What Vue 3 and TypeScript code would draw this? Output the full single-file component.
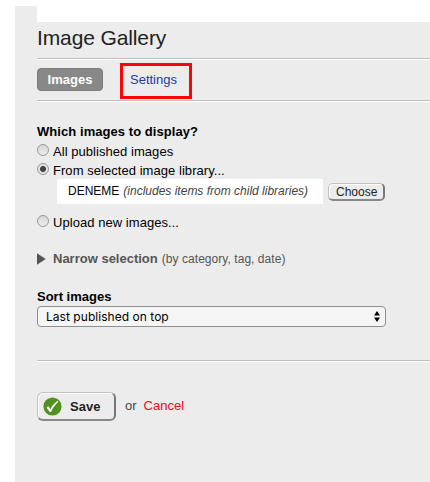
<script setup lang="ts">
import { ref } from 'vue'

const source = ref('library')
const library = 'DENEME'
const sortOrder = 'Last published on top'
</script>

<template>
  <div class="page">
    <main class="panel">
      <div class="notch"></div>
      <h1 class="title"><span>Image Gallery</span></h1>
      <nav class="tabs">
        <a class="tab active"><span>Images</span></a>
        <a class="tab marked"><span>Settings</span></a>
      </nav>
      <section class="choices">
        <h2 class="heading question"><span>Which images to display?</span></h2>
        <label class="option" @click="source = 'all'">
          <i class="radio" :class="{ on: source === 'all' }"></i><span>All published images</span>
        </label>
        <label class="option second" @click="source = 'library'">
          <i class="radio" :class="{ on: source === 'library' }"></i><span>From selected image library...</span>
        </label>
        <div class="library">
          <div class="library-name"><span>{{ library }}</span><em>(includes items from child libraries)</em></div>
          <button class="choose"><span>Choose</span></button>
        </div>
        <label class="option upload" @click="source = 'upload'">
          <i class="radio" :class="{ on: source === 'upload' }"></i><span>Upload new images...</span>
        </label>
      </section>
      <div class="narrow">
        <svg width="9" height="12" viewBox="0 0 9 12"><path d="M0 .3 8.7 6 0 11.7z" fill="#555" /></svg>
        <b>Narrow selection</b><span class="hint">(by category, tag, date)</span>
      </div>
      <h2 class="heading sort"><span>Sort images</span></h2>
      <div class="select">
        <span>{{ sortOrder }}</span>
        <svg width="6" height="11" viewBox="0 0 6 11"><path d="M3 0 6 4.5H0zM0 6.5h6L3 11z" fill="#000" /></svg>
      </div>
      <footer class="actions">
        <button class="save">
          <svg width="19" height="19" viewBox="0 0 19 19">
            <circle cx="9.5" cy="9.5" r="9.1" fill="#529023" />
            <path d="M3.5 10.4 5.2 9.2l2.2 3C8.9 9 11.2 6.2 14.6 3.8l.8.7C12.2 7.6 9.6 11 8.1 15H6.7z" fill="#fff" />
          </svg>
          <b>Save</b>
        </button>
        <span class="or">or</span>
        <a class="cancel">Cancel</a>
      </footer>
    </main>
  </div>
</template>

<style>
body { margin: 0; background: #fff; }
</style>

<style scoped>
.page {
  box-sizing: border-box;
  width: 430px;
  height: 482px;
  padding: 6px 0 0 15px;
  overflow: hidden;
  font: 13px/18px "Liberation Sans", Arial, sans-serif;
  color: #000;
}
.panel {
  box-sizing: border-box;
  height: 476px;
  padding-left: 22px;
  background: #ececec;
}
span, b, em { white-space: nowrap; }
.notch { height: 16px; background: #fff; }
.title {
  box-sizing: border-box;
  height: 37px;
  margin: 0;
  font-size: 21px;
  line-height: 32px;
  font-weight: 400;
  letter-spacing: -0.12px;
  color: #222;
  border-bottom: 1px solid #bdbdbd;
}
.tabs {
  box-sizing: border-box;
  display: flex;
  gap: 17px;
  height: 42px;
  padding-top: 3px;
  border-top: 1px solid #fff;
  border-bottom: 1px solid #bdbdbd;
}
.active {
  box-sizing: border-box;
  width: 66px;
  height: 23px;
  margin-top: 5px;
  border: 1px solid #7c7c7c;
  border-radius: 4px;
  background: #888;
  color: #fff;
  font-weight: 700;
  line-height: 22px;
  text-align: center;
}
.marked {
  box-sizing: border-box;
  width: 72px;
  height: 36px;
  padding-left: 7px;
  border: 3px solid #f90408;
  color: #1c3c9f;
  line-height: 27px;
}
.choices { border-top: 1px solid #fff; padding-top: 21px; }
.heading { margin: 0; font-size: 13px; line-height: 18px; height: 18px; }
.question { letter-spacing: 0.06px; }
.option { display: flex; gap: 4px; height: 19px; line-height: 21px; letter-spacing: 0.05px; }
.second { height: 20px; line-height: 22px; }
.radio {
  box-sizing: border-box;
  flex: none;
  width: 12px;
  height: 12px;
  margin-top: 3px;
  border: 1px solid #999;
  border-radius: 50%;
  background: linear-gradient(#d6d6d6, #ececec);
}
.radio.on { background: radial-gradient(circle, #444 0 2.6px, #e2e2e2 3.4px); }
.library { display: flex; gap: 5px; margin: -1px 0 0 20px; }
.library-name {
  box-sizing: border-box;
  display: flex;
  gap: 4px;
  width: 266px;
  height: 25px;
  padding-left: 11px;
  background: #fff;
  font-size: 12px;
  line-height: 24px;
}
em { color: #444; }
button {
  box-sizing: border-box;
  display: flex;
  align-items: center;
  padding: 0;
  font-family: inherit;
  background: #ececec;
  border: 2px solid;
  border-color: #c2c2c2 #777 #888 #c2c2c2;
  box-shadow: inset 1px 1px #fff;
}
.choose {
  width: 57px;
  height: 18px;
  margin-top: 4px;
  border-width: 1px 2px 2px 1px;
  border-radius: 5px;
  padding-left: 7px;
  font-size: 12px;
  line-height: 14px;
  color: #222;
}
.upload { margin-top: 8px; line-height: 22px; }
.narrow { display: flex; height: 18px; margin-top: 19px; color: #555; }
.narrow svg { margin-top: 3px; margin-right: 7px; }
.hint { margin-left: 4px; font-size: 12px; line-height: 19px; letter-spacing: 0.05px; }
.sort { margin-top: 20px; }
.select {
  box-sizing: border-box;
  display: flex;
  align-items: center;
  justify-content: space-between;
  width: 349px;
  height: 21px;
  padding: 0 5px 0 8px;
  border: 1px solid #8f8f8f;
  border-radius: 4px;
  background: #f5f5f5;
  font-family: Inter, sans-serif;
  font-size: 12px;
  letter-spacing: 0.04px;
}
.actions {
  display: flex;
  margin-top: 33px;
  padding-top: 31px;
  border-top: 1px solid #bdbdbd;
  box-shadow: inset 0 1px #fff;
}
.save {
  width: 79px;
  height: 29px;
  padding-left: 5px;
  gap: 8px;
  border-width: 1px 2px 2px 1px;
  border-radius: 6px;
  color: #222;
  font-size: 13px;
}
.or { margin: 5px 7px 0 9px; color: #444; }
.cancel { margin-top: 5px; color: #f7051b; }
</style>
